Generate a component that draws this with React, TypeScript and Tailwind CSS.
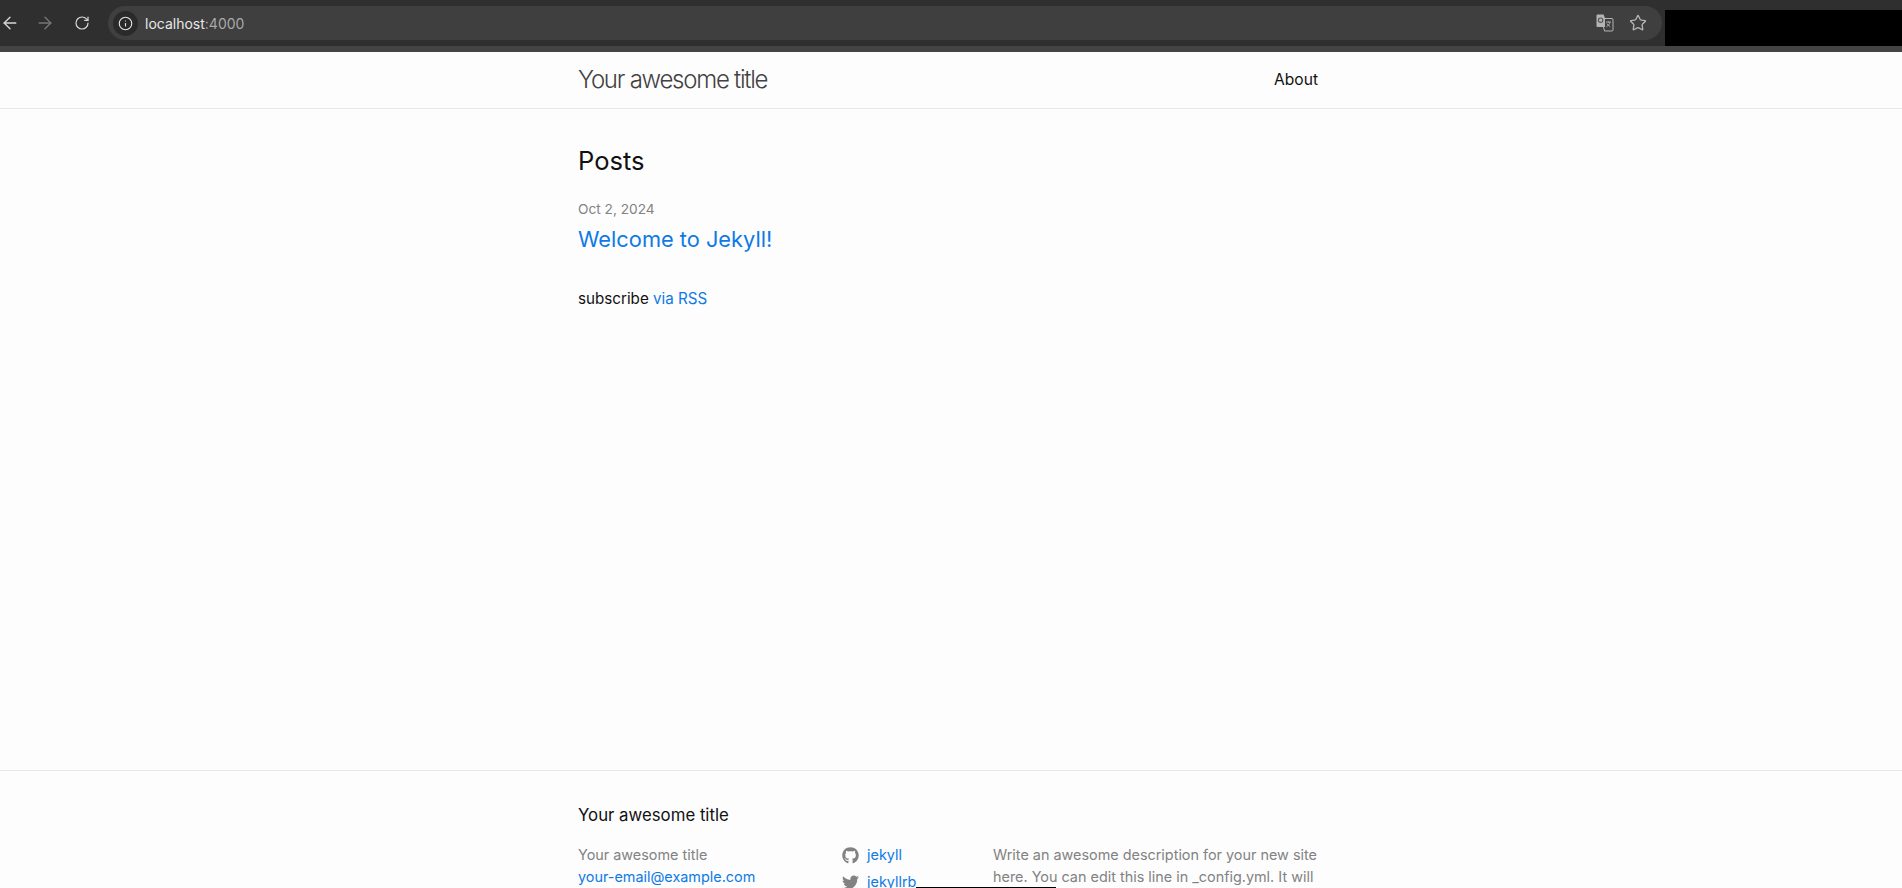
import React from 'react';
import { ArrowLeft, ArrowRight, RotateCw, Info, Star } from 'lucide-react';
import { FaGithub, FaTwitter } from 'react-icons/fa';

const TranslateIcon = () => (
  <svg width="18" height="18" viewBox="0 0 18 18" fill="none">
    <path d="M0.5 1.5a1 1 0 011-1h6l1.5 3.5v9H1.5a1 1 0 01-1-1z" fill="#b4b4b4" />
    <circle cx="4.6" cy="6.2" r="2.2" stroke="#555" strokeWidth="1.1" />
    <path d="M8 4.5h8a1 1 0 011 1v10.5a1 1 0 01-1 1H8.5l-1-4" stroke="#b4b4b4" strokeWidth="1" />
    <path d="M10 8h5M12.5 7.5v1M14 8c-.5 2.3-1.8 3.8-3.6 4.8M11 9.6c.7 1.3 1.8 2.4 3.2 3" stroke="#b4b4b4" strokeWidth="0.9" />
  </svg>
);

const BrowserBar = () => (
  <div className="relative shrink-0">
    <div className="h-[46px] bg-[#2f2f2f] flex items-center">
      <div className="flex items-center w-[108px] text-[#d8d8d8]">
        <ArrowLeft size={20} strokeWidth={1.6} />
        <ArrowRight size={20} strokeWidth={1.6} className="ml-[15px] text-[#777777]" />
        <RotateCw size={16} strokeWidth={1.8} className="ml-[19px]" />
      </div>
      <div className="w-[1554px] h-[34px] rounded-full bg-[#3f3f3f] flex items-center pl-[5px] pr-[15px]">
        <div className="w-[25px] h-[25px] rounded-full bg-[#2a2a2a] flex items-center justify-center text-[#e6e6e6]">
          <Info size={15} strokeWidth={1.8} />
        </div>
        <span className="ml-[7px] text-[14px] text-[#e8e8e8]">localhost<span className="text-[#a9a9a9]">:4000</span></span>
        <div className="ml-auto flex items-center gap-[15px] text-[#b4b4b4]">
          <TranslateIcon />
          <Star size={18} strokeWidth={1.8} />
        </div>
      </div>
      <div className="w-[237px] h-[36px] ml-auto mt-[10px] bg-black" />
    </div>
    <div className="h-[6px] bg-[#444444]" />
  </div>
);

export default function App() {
  return (
    <div className="relative h-screen overflow-hidden flex flex-col bg-[#fdfdfd] font-['Inter','Liberation_Sans',sans-serif] text-[#111111]">
      <BrowserBar />

      <header className="h-[57px] shrink-0 border-b border-[#e8e8e8] pr-[6px]">
        <div className="mx-auto w-[740px] h-full flex items-center justify-between">
          <a className="text-[24px] font-light tracking-[-1.25px] text-[#424242]">Your awesome title</a>
          <a className="text-[15.6px]">About</a>
        </div>
      </header>

      <main className="h-[661px] shrink-0 pr-[6px]">
        <div className="mx-auto w-[740px] pt-[32px]">
          <h2 className="text-[25.5px] leading-[40px]">Posts</h2>
          <div className="mt-[18px] text-[13.7px] leading-[20px] text-[#828282]">Oct 2, 2024</div>
          <h3 className="text-[21.8px] leading-[34px] text-[#0f7ae5] mt-[3px]">Welcome to Jekyll!</h3>
          <p className="mt-[31px] text-[15.2px] leading-[24px]">
            subscribe <a className="text-[#0f7ae5]">via RSS</a>
          </p>
        </div>
      </main>

      <footer className="border-t border-[#e8e8e8] pr-[6px]">
        <div className="mx-auto w-[740px] pt-[31px]">
          <h2 className="text-[16.8px] leading-[26px]">Your awesome title</h2>
          <div className="mt-[16px] flex text-[14.4px] leading-[22px]">
            <div className="w-[264px] text-[#828282]">
              <div>Your awesome title</div>
              <a className="text-[#0f7ae5]">your-email@example.com</a>
            </div>
            <div className="w-[151px] flex flex-col gap-[5px] text-[#0f7ae5]">
              <div className="flex items-center gap-[8px]">
                <FaGithub size={17} className="text-[#828282]" />
                <a>jekyll</a>
              </div>
              <div className="flex items-center gap-[8px]">
                <FaTwitter size={17} className="text-[#828282]" />
                <a>jekyllrb</a>
              </div>
            </div>
            <p className="flex-1 text-[#828282]">
              Write an awesome description for your new site here. You can edit this line in _config.yml. It will appear in your document head meta (for Google search results) and in your feed.xml site description.
            </p>
          </div>
        </div>
      </footer>

      <div className="absolute left-[916px] bottom-0 w-[140px] h-[1px] bg-black" />
    </div>
  );
}
